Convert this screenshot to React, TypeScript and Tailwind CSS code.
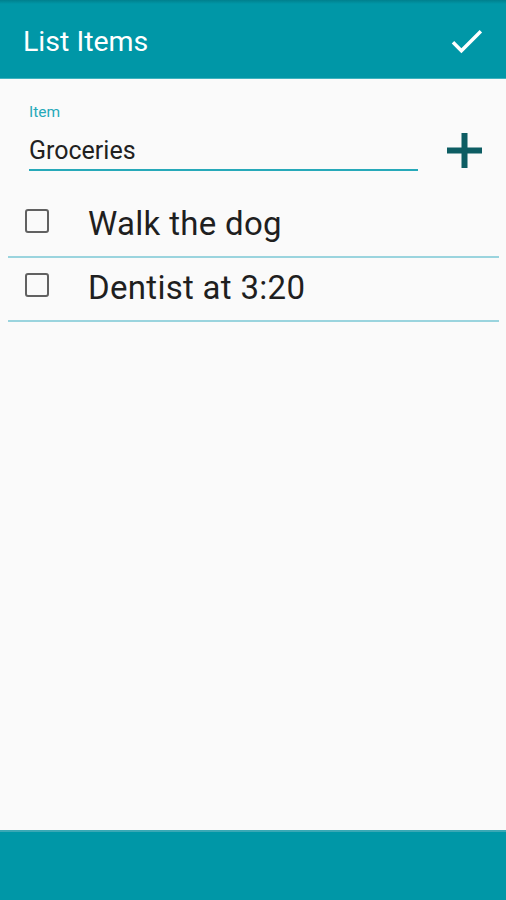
import { useState } from "react";

type Item = { id: number; text: string; done: boolean };

export default function App() {
  const [draft, setDraft] = useState("Groceries");
  const [items, setItems] = useState<Item[]>([
    { id: 1, text: "Walk the dog", done: false },
    { id: 2, text: "Dentist at 3:20", done: false },
  ]);

  const toggle = (id: number) =>
    setItems((prev) => prev.map((it) => (it.id === id ? { ...it, done: !it.done } : it)));

  const addItem = () => {
    if (!draft.trim()) return;
    setItems((prev) => [...prev, { id: Date.now(), text: draft.trim(), done: false }]);
    setDraft("");
  };

  return (
    <div className="w-[506px] h-[900px] flex flex-col bg-[#fafafa] font-['Roboto','Liberation_Sans',sans-serif]">
      {/* toolbar */}
      <header className="h-[79px] shrink-0 flex items-center justify-between pl-[23px] pr-[23px] pt-[5px] bg-[linear-gradient(to_bottom,#00808d_0px,#0097a7_4px)] border-b border-[#3fb2bf]">
        <h1 className="text-[28.5px] leading-[36px] text-white">List Items</h1>
        <button aria-label="Done">
          <svg width="32" height="25" viewBox="3 5 18.5 14.5" fill="white">
            <path d="M9 16.17L4.83 12l-1.42 1.41L9 19 21 7l-1.41-1.41z" />
          </svg>
        </button>
      </header>

      <main className="flex-1 flex flex-col">
        {/* new item field */}
        <div className="flex items-end pl-[29px] pr-6 pt-[25px]">
          <div className="w-[389px] flex flex-col">
            <label className="text-[15.5px] leading-4 text-[#26a9b9]">Item</label>
            <input
              value={draft}
              onChange={(e) => setDraft(e.target.value)}
              className="mt-[17px] pb-[4px] text-[25px] leading-[28px] text-[#212121] bg-transparent border-b-2 border-[#26a9b9] outline-none"
            />
          </div>
          <button onClick={addItem} aria-label="Add" className="ml-auto mb-[3px]">
            <svg width="35" height="35" viewBox="0 0 35 35" fill="#0d5d63">
              <rect x="0" y="14.5" width="35" height="6" />
              <rect x="14.5" y="0" width="6" height="35" />
            </svg>
          </button>
        </div>

        {/* list */}
        <ul className="mt-[23px] ml-2 mr-[7px]">
          {items.map((it) => (
            <li
              key={it.id}
              className="h-[64px] flex items-center pl-[17px] pb-2 border-b-2 border-[#9ad4de]"
            >
              <button
                onClick={() => toggle(it.id)}
                className="w-6 h-6 rounded-[3px] border-2 border-[#616161] flex items-center justify-center"
              >
                {it.done && (
                  <svg width="16" height="16" viewBox="0 0 24 24" fill="#616161">
                    <path d="M9 16.17L4.83 12l-1.42 1.41L9 19 21 7l-1.41-1.41z" />
                  </svg>
                )}
              </button>
              <span className="ml-[39px] pt-[5px] text-[33px] leading-[38px] tracking-[0.3px] text-[#1f1f1f]">{it.text}</span>
            </li>
          ))}
        </ul>
      </main>

      {/* bottom bar */}
      <footer className="h-[70px] shrink-0 bg-[#0097a7] border-t-2 border-[#3aa8b5]" />
    </div>
  );
}
